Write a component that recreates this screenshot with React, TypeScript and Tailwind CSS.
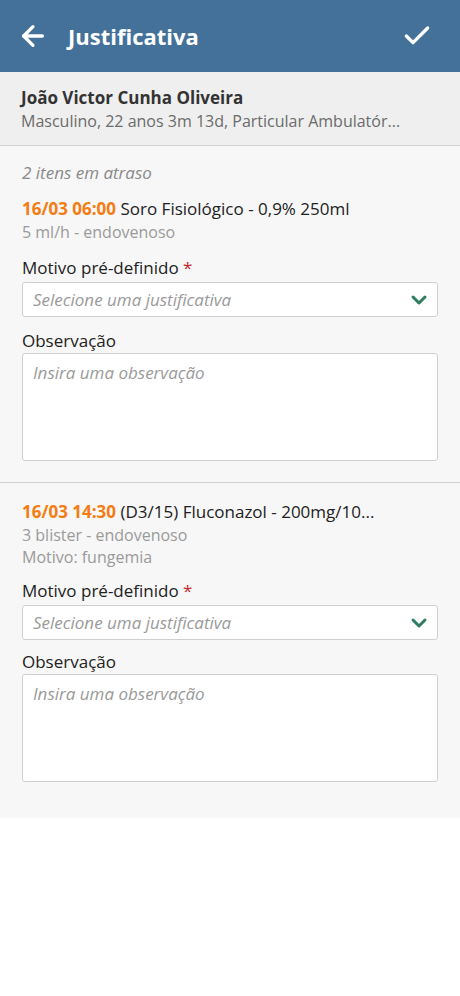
import { ArrowLeft, Check, ChevronDown } from 'lucide-react';

const font = { fontFamily: '"Open Sans", "Noto Sans", sans-serif' };

function ItemForm({ labelTop, obsTop }: { labelTop: string; obsTop: string }) {
  return (
    <>
      <div className={`${labelTop} text-[17px] leading-[22px] text-[#222]`}>
        Motivo pré-definido <span className="text-[#c62828]">*</span>
      </div>
      <div className="mt-[3px] flex h-[35px] items-center justify-between rounded-[3px] border border-[#cfcfcf] bg-white pl-[10px] pr-[6px]">
        <span className="text-[17px] italic text-[#9a9a9a]">Selecione uma justificativa</span>
        <ChevronDown className="h-[24px] w-[24px] text-[#2e7d5c]" strokeWidth={3} />
      </div>
      <div className={`${obsTop} text-[17px] leading-[22px] text-[#222]`}>Observação</div>
      <div className="mt-[1px] h-[108px] rounded-[3px] border border-[#cfcfcf] bg-white px-[10px] pt-[6px]">
        <span className="text-[17px] italic text-[#9a9a9a]">Insira uma observação</span>
      </div>
    </>
  );
}

export default function App() {
  return (
    <div className="min-h-[996px] w-[460px] bg-white" style={font}>
      <header className="flex h-[72px] items-center bg-[#43719a] px-[17px] text-white">
        <ArrowLeft className="h-[32px] w-[32px]" strokeWidth={2.5} />
        <h1 className="ml-[19px] flex-1 text-[22px] font-bold">Justificativa</h1>
        <Check className="mr-[10px] h-[32px] w-[32px]" strokeWidth={2.5} />
      </header>

      <div className="h-[74px] border-b border-[#d2d2d2] bg-[#efefef] px-[21px] pt-[14px]">
        <div className="text-[17px] font-bold leading-[24px] text-[#333]">João Victor Cunha Oliveira</div>
        <div className="truncate text-[16px] leading-[22px] text-[#6b6b6b]">
          Masculino, 22 anos 3m 13d, Particular Ambulatór...
        </div>
      </div>

      <div className="bg-[#f7f7f7]">
        <section className="border-b border-[#cfcfcf] px-[22px] pb-[21px] pt-[16px]">
          <div className="text-[17px] italic leading-[22px] text-[#8a8a8a]">2 itens em atraso</div>
          <div className="mt-[13px] text-[17px] leading-[24px] text-[#222]">
            <span className="font-bold text-[#f57c12]">16/03 06:00</span> Soro Fisiológico - 0,9% 250ml
          </div>
          <div className="text-[16px] leading-[22px] text-[#9a9a9a]">5 ml/h - endovenoso</div>
          <ItemForm labelTop="mt-[14px]" obsTop="mt-[13px]" />
        </section>

        <section className="px-[22px] pb-[36px] pt-[17px]">
          <div className="text-[17px] leading-[24px] text-[#222]">
            <span className="font-bold text-[#f57c12]">16/03 14:30</span> (D3/15) Fluconazol - 200mg/10...
          </div>
          <div className="text-[16px] leading-[22px] text-[#9a9a9a]">3 blister - endovenoso</div>
          <div className="text-[16px] leading-[22px] text-[#9a9a9a]">Motivo: fungemia</div>
          <ItemForm labelTop="mt-[12px]" obsTop="mt-[11px]" />
        </section>
      </div>
    </div>
  );
}
